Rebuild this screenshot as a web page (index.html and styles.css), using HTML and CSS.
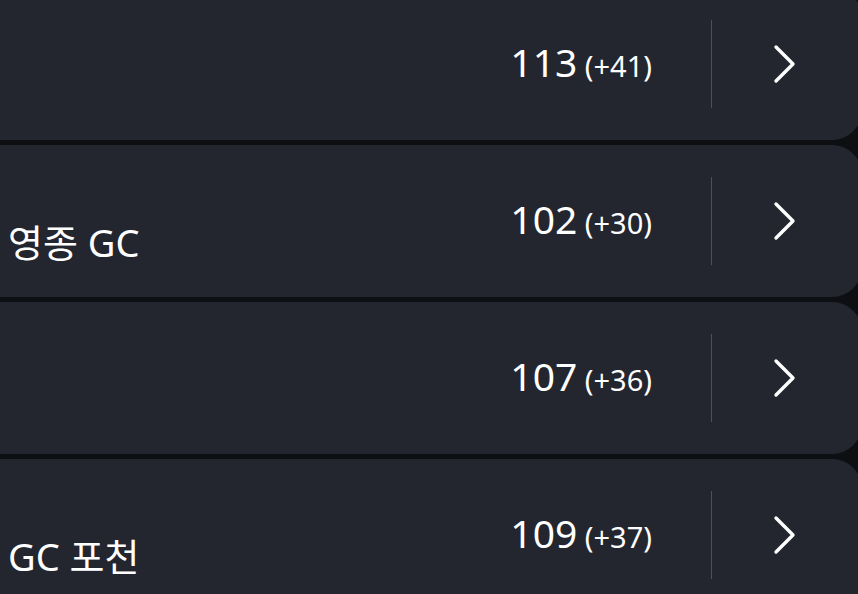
FILE: index.html
```html
<!DOCTYPE html>
<html lang="ko">
<head>
<meta charset="utf-8">
<title>Rounds</title>
<link rel="stylesheet" href="styles.css">
</head>
<body>
<div class="list">
  <div class="card">
    <div class="info"><span class="name"></span></div>
    <div class="score">113<span class="diff"> (+41)</span></div>
    <div class="divider"></div>
    <div class="go"><svg width="24" height="40" viewBox="0 0 24 40"><path d="M3 3 L20 20 L3 37" /></svg></div>
  </div>
  <div class="card">
    <div class="info"><span class="name">영종 GC</span></div>
    <div class="score">102<span class="diff"> (+30)</span></div>
    <div class="divider"></div>
    <div class="go"><svg width="24" height="40" viewBox="0 0 24 40"><path d="M3 3 L20 20 L3 37" /></svg></div>
  </div>
  <div class="card">
    <div class="info"><span class="name"></span></div>
    <div class="score">107<span class="diff"> (+36)</span></div>
    <div class="divider"></div>
    <div class="go"><svg width="24" height="40" viewBox="0 0 24 40"><path d="M3 3 L20 20 L3 37" /></svg></div>
  </div>
  <div class="card">
    <div class="info"><span class="name">GC 포천</span></div>
    <div class="score">109<span class="diff"> (+37)</span></div>
    <div class="divider"></div>
    <div class="go"><svg width="24" height="40" viewBox="0 0 24 40"><path d="M3 3 L20 20 L3 37" /></svg></div>
  </div>
</div>
</body>
</html>
```

FILE: styles.css
```css
html, body {
  margin: 0;
  padding: 0;
  height: 594px;
  overflow: hidden;
  background: #0d0f12;
}

body {
  font-family: "Noto Sans", "Noto Sans CJK KR", sans-serif;
  color: #ffffff;
}

.list {
  display: flex;
  flex-direction: column;
  gap: 5px;
  margin-top: -12px;
  margin-left: -40px;
  margin-right: -4px;
}

.card {
  flex: none;
  height: 152px;
  background: #23262f;
  border-radius: 30px;
  display: flex;
  align-items: center;
  padding-left: 48px;
  padding-right: 4px;
}

.info {
  flex: 1;
  align-self: stretch;
  padding-top: 73px;
  box-sizing: border-box;
}

.name {
  font-size: 38px;
  line-height: 48px;
  white-space: nowrap;
}

.score {
  align-self: flex-start;
  padding-top: 50px;
  padding-right: 59px;
  font-size: 39px;
  line-height: 48px;
  white-space: nowrap;
}

.diff {
  font-size: 29px;
  line-height: 1;
}

.divider {
  width: 1px;
  height: 88px;
  background: #4d515b;
}

.go {
  width: 146px;
  display: flex;
  align-items: center;
  justify-content: center;
}

.go svg path {
  fill: none;
  stroke: #ffffff;
  stroke-width: 3.4;
  stroke-linecap: round;
  stroke-linejoin: round;
}
```
